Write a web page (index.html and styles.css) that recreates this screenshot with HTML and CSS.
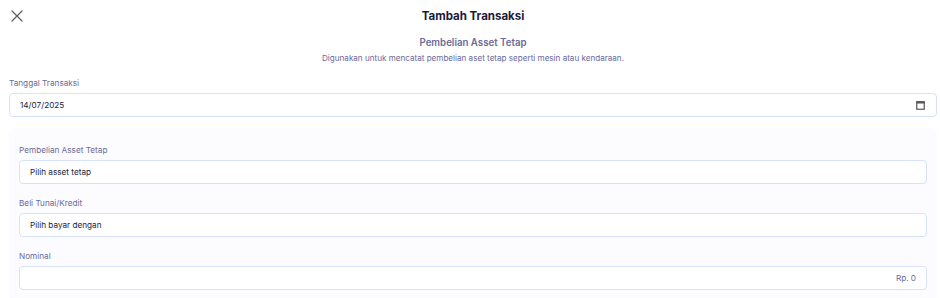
FILE: index.html
```html
<!DOCTYPE html>
<html lang="id">
  <head>
    <meta charset="utf-8">
    <meta name="viewport" content="width=device-width, initial-scale=1.0">
    <title>Tambah Transaksi</title>
    <link rel="stylesheet" href="styles.css">
  </head>
  <body>
    <div class="page">
      <div class="header">
        <div class="close">
          <svg width="12" height="12" viewBox="0 0 12 12">
            <path d="M1 1L11 11M11 1L1 11" stroke="#5f5f5f" stroke-width="1.3" fill="none" stroke-linecap="round"/>
          </svg>
        </div>
        <div class="title">Tambah Transaksi</div>
        <div></div>
      </div>

      <div class="intro">
        <div class="intro-title">Pembelian Asset Tetap</div>
        <div class="intro-desc">Digunakan untuk mencatat pembelian aset tetap seperti mesin atau kendaraan.</div>
      </div>

      <div class="field">
        <div class="label">Tanggal Transaksi</div>
        <div class="input date">
          <span>14/07/2025</span>
          <svg width="9" height="9" viewBox="0 0 9 9">
            <rect x="0.75" y="0.75" width="7.5" height="7.5" fill="none" stroke="#555" stroke-width="1.2"/>
            <rect x="0.5" y="0.5" width="8" height="2" fill="#555"/>
          </svg>
        </div>
      </div>

      <div class="card">
        <div class="field">
          <div class="label">Pembelian Asset Tetap</div>
          <div class="input">Pilih asset tetap</div>
        </div>
        <div class="field">
          <div class="label">Beli Tunai/Kredit</div>
          <div class="input">Pilih bayar dengan</div>
        </div>
        <div class="field">
          <div class="label">Nominal</div>
          <div class="input amount">Rp. 0</div>
        </div>
      </div>
    </div>
  </body>
</html>
```

FILE: styles.css
```css
html, body {
  margin: 0;
  background: #fff;
}

.page {
  padding: 0 3px 0 9px;
  font-family: Inter, "Noto Sans", sans-serif;
  color: #1c1d3d;
}

.header {
  display: grid;
  grid-template-columns: 40px 1fr 40px;
  align-items: center;
  height: 32px;
}
.close {
  display: flex;
  padding-left: 2px;
}
.title {
  text-align: center;
  font-size: 11.5px;
  font-weight: 700;
  color: #1a1b3b;
}

.intro {
  text-align: center;
  padding-top: 4px;
}
.intro-title {
  font-size: 9.7px;
  font-weight: 600;
  color: #6a6a9a;
  line-height: 14px;
}
.intro-desc {
  font-size: 8.1px;
  color: #6a6a9a;
  line-height: 12px;
  margin-top: 2px;
}

.field {
  display: flex;
  flex-direction: column;
  gap: 4px;
  margin-top: 13px;
}
.label {
  font-size: 8.2px;
  line-height: 12px;
  color: #6a6a9a;
}
.input {
  display: flex;
  align-items: center;
  justify-content: space-between;
  height: 24px;
  box-sizing: border-box;
  padding: 0 10px;
  border: 1px solid #d9e2fb;
  border-radius: 4px;
  background: #fff;
  font-size: 8.2px;
  color: #1c1d3d;
}
.date {
  padding-right: 11px;
}
.amount {
  justify-content: flex-end;
  color: #6a6a9a;
}

.card {
  margin-top: 11px;
  padding: 16px 10px 12px 10px;
  background: #fcfcfe;
  border-radius: 6px;
}
.card .field:first-child {
  margin-top: 0;
}
```
